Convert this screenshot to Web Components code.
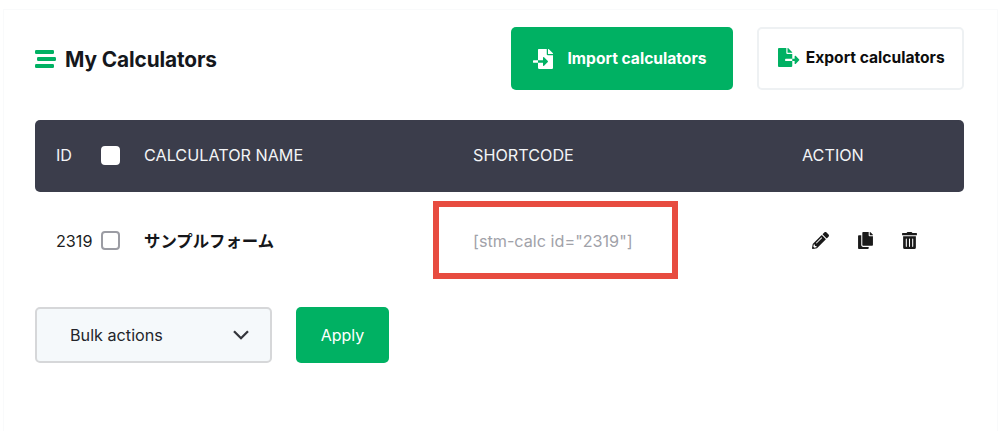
<!DOCTYPE html>
<html lang="ja">
<head>
<meta charset="utf-8">
<title>My Calculators</title>
<style>
  html, body { margin: 0; height: 100%; background: #fff; }
  body { font-family: Inter, "Noto Sans CJK JP", sans-serif; color: #111; overflow: hidden; }
</style>
</head>
<body>
<calc-page>
  <calc-header></calc-header>
  <calc-table></calc-table>
  <calc-footer></calc-footer>
</calc-page>

<script>
const GREEN = '#00b163';

class CalcPage extends HTMLElement {
  constructor() {
    super();
    this.attachShadow({ mode: 'open' });
    this.shadowRoot.innerHTML = `
      <style>
        :host {
          display: block;
          box-sizing: border-box;
          margin: 9px 2px 0 3px;
          height: 422px;
          padding: 17px 33px 0 31px;
          border: 1px solid #f9fafb;
          border-bottom: 0;
        }
      </style>
      <slot></slot>
    `;
  }
}

class CalcHeader extends HTMLElement {
  constructor() {
    super();
    this.attachShadow({ mode: 'open' });
    this.shadowRoot.innerHTML = `
      <style>
        :host { display: flex; align-items: center; height: 63px; }
        .title { display: flex; align-items: center; gap: 9px; font-size: 20.8px; font-weight: 700; color: #15171c; letter-spacing: -0.1px; flex: 1; margin-top: 1px; }
        .bars { width: 21px; height: 18px; display: block; }
        .btn {
          box-sizing: border-box; height: 63px; border-radius: 5px;
          display: flex; align-items: center; justify-content: center;
          font-size: 15.6px; font-weight: 700;
        }
        .import { width: 222px; background: ${GREEN}; color: #fff; gap: 14px; margin-right: 24px; padding-right: 4px; }
        .export { width: 207px; background: #fff; color: #0d0d0d; border: 2px solid #eef1f3; gap: 6px; padding: 0 0 2px 2px; }
      </style>
      <div class="title">
        <svg class="bars" viewBox="0 0 21 18" fill="${GREEN}">
          <rect x="0" y="0" width="19" height="4" rx="1.2"/>
          <rect x="2" y="7" width="19" height="4" rx="1.2"/>
          <rect x="0" y="14" width="19" height="4" rx="1.2"/>
        </svg>
        <span>My Calculators</span>
      </div>
      <div class="btn import">
        <svg width="20" height="20" viewBox="0 0 512 512" fill="#fff"><path d="M16 288c-8.800 0-16 7.200-16 16v32c0 8.800 7.200 16 16 16h112v-64zm489-183L407.100 7c-4.500-4.500-10.600-7-17-7H384v128h128v-6.100c0-6.300-2.500-12.400-7-16.900zm-153 31V0H152c-13.300 0-24 10.700-24 24v264h128v-65.200c0-14.300 17.300-21.400 27.400-11.300L379 308c6.600 6.700 6.600 17.400 0 24l-95.700 96.400c-10.100 10.100-27.400 3-27.400-11.300V352H128v136c0 13.300 10.700 24 24 24h336c13.300 0 24-10.700 24-24V160H376c-13.200 0-24-10.800-24-24z"/></svg>
        <span>Import calculators</span>
      </div>
      <div class="btn export">
        <svg width="21.4" height="19" viewBox="0 0 576 512" fill="${GREEN}"><path d="M384 121.900c0-6.300-2.500-12.400-7-16.900L279.100 7c-4.500-4.500-10.600-7-17-7H256v128h128zM571 308l-95.700-96.400c-10.100-10.100-27.400-3-27.400 11.300V288h-64v64h64v65.200c0 14.300 17.300 21.400 27.400 11.300L571 332c6.600-6.600 6.600-17.400 0-24zm-379 28v-32c0-8.800 7.200-16 16-16h176V160H248c-13.200 0-24-10.800-24-24V0H24C10.700 0 0 10.700 0 24v464c0 13.300 10.700 24 24 24h336c13.300 0 24-10.700 24-24V352H208c-8.800 0-16-7.200-16-16z"/></svg>
        <span>Export calculators</span>
      </div>
    `;
  }
}

class CalcCheckbox extends HTMLElement {
  constructor() {
    super();
    this.attachShadow({ mode: 'open' });
    this.shadowRoot.innerHTML = `
      <style>
        :host {
          display: block; box-sizing: border-box; width: 19px; height: 19px;
          border-radius: 4px; background: #fff; border: 2px solid #9b9ca3;
        }
        :host([solid]) { border-color: #fff; }
      </style>
    `;
  }
}

class CalcTable extends HTMLElement {
  constructor() {
    super();
    this.attachShadow({ mode: 'open' });
    this.shadowRoot.innerHTML = `
      <style>
        :host { display: block; margin-top: 30px; position: relative; }
        .row {
          display: grid;
          grid-template-columns: 45px 43px 329px 329px 1fr;
          align-items: center;
          padding-left: 21px;
        }
        .head {
          height: 72px; box-sizing: border-box; background: #3b3d4b; color: #f3f4f6;
          border-radius: 5px; font-size: 16.2px; font-weight: 400; padding-bottom: 2px;
        }
        .body { height: 99px; box-sizing: border-box; font-size: 16.2px; color: #1d1e22; padding-bottom: 2px; }
        .name { font-family: "Noto Sans CJK JP", sans-serif; font-weight: 700; font-size: 16.4px; color: #15161a; padding-bottom: 2px; }
        .code { color: #a1a2a9; }
        .actions { display: flex; align-items: center; gap: 29px; margin-left: 10px; }
        .actions svg { display: block; height: 17px; fill: #1a1a1a; }
        .mark {
          position: absolute; left: 398px; top: 81px; width: 245px; height: 78px;
          box-sizing: border-box; border: 6px solid #e74c40; pointer-events: none;
        }
      </style>
      <div class="row head">
        <span>ID</span>
        <calc-checkbox solid></calc-checkbox>
        <span>CALCULATOR NAME</span>
        <span>SHORTCODE</span>
        <span>ACTION</span>
      </div>
      <div class="row body">
        <span>2319</span>
        <calc-checkbox></calc-checkbox>
        <span class="name">サンプルフォーム</span>
        <span class="code">[stm-calc id="2319"]</span>
        <div class="actions">
          <svg width="17" viewBox="0 0 512 512"><path d="M497.900 142.100l-46.100 46.100c-4.700 4.700-12.300 4.700-17 0l-111-111c-4.700-4.700-4.700-12.300 0-17l46.100-46.100c18.700-18.700 49.100-18.700 67.900 0l60.100 60.100c18.800 18.700 18.800 49.100 0 67.900zM284.200 99.800L21.600 362.400.4 483.900c-2.900 16.400 11.400 30.600 27.800 27.800l121.500-21.300 262.600-262.600c4.700-4.700 4.700-12.300 0-17l-111-111c-4.800-4.700-12.400-4.700-17.100 0zM124.100 339.900c-5.500-5.500-5.500-14.300 0-19.800l154-154c5.500-5.500 14.300-5.500 19.800 0s5.500 14.300 0 19.800l-154 154c-5.500 5.500-14.300 5.500-19.800 0zM88 424h48v36.300l-64.500 11.300-31.100-31.100L51.700 376H88v48z"/></svg>
          <svg width="15" viewBox="0 0 448 512"><path d="M320 448v40c0 13.255-10.745 24-24 24H24c-13.255 0-24-10.745-24-24V120c0-13.255 10.745-24 24-24h72v296c0 30.879 25.121 56 56 56h168zm0-344V0H152c-13.255 0-24 10.745-24 24v368c0 13.255 10.745 24 24 24h272c13.255 0 24-10.745 24-24V128H344c-13.200 0-24-10.800-24-24zm120.971-31.029L375.029 7.029A24 24 0 0 0 358.059 0H352v96h96v-6.059a24 24 0 0 0-7.029-16.970z"/></svg>
          <svg width="15" viewBox="0 0 448 512"><path d="M32 464a48 48 0 0 0 48 48h288a48 48 0 0 0 48-48V128H32zm272-256a16 16 0 0 1 32 0v224a16 16 0 0 1-32 0zm-96 0a16 16 0 0 1 32 0v224a16 16 0 0 1-32 0zm-96 0a16 16 0 0 1 32 0v224a16 16 0 0 1-32 0zM432 32H312l-9.400-18.700A24 24 0 0 0 281.100 0H166.800a23.720 23.720 0 0 0-21.400 13.300L136 32H16A16 16 0 0 0 0 48v32a16 16 0 0 0 16 16h416a16 16 0 0 0 16-16V48a16 16 0 0 0-16-16z"/></svg>
        </div>
      </div>
      <div class="mark"></div>
    `;
  }
}

class CalcFooter extends HTMLElement {
  constructor() {
    super();
    this.attachShadow({ mode: 'open' });
    this.shadowRoot.innerHTML = `
      <style>
        :host { display: flex; gap: 24px; margin-top: 16px; height: 56px; }
        .select {
          box-sizing: border-box; width: 237px; height: 56px;
          background: #f5f9fb; border: 2px solid #d6d7d9; border-radius: 5px;
          display: flex; align-items: center; justify-content: space-between;
          padding: 0 21px 0 33px; font-size: 16.2px; color: #23252b;
        }
        .select svg { display: block; }
        .apply {
          width: 93px; height: 56px; border-radius: 5px; background: ${GREEN}; color: #fff;
          display: flex; align-items: center; justify-content: center; font-size: 16px;
        }
      </style>
      <div class="select">
        <span>Bulk actions</span>
        <svg width="16" height="10" viewBox="0 0 16 10" fill="none" stroke="#33353b" stroke-width="2.300"><path d="M1 1.200l7 7 7-7"/></svg>
      </div>
      <div class="apply">Apply</div>
    `;
  }
}

customElements.define('calc-page', CalcPage);
customElements.define('calc-header', CalcHeader);
customElements.define('calc-checkbox', CalcCheckbox);
customElements.define('calc-table', CalcTable);
customElements.define('calc-footer', CalcFooter);
</script>
</body>
</html>
